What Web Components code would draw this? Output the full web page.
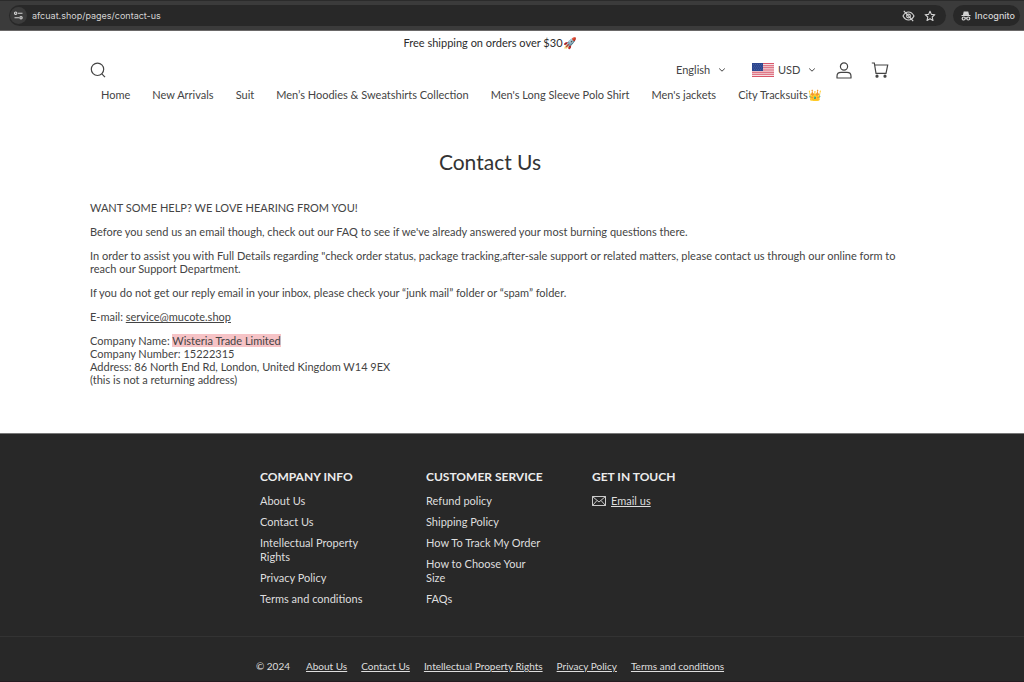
<!DOCTYPE html>
<html lang="en">
<head>
<meta charset="utf-8">
<title>Contact Us</title>
<style>
html { background: #282828; }
body { margin: 0; font-family: Lato, "Noto Sans", sans-serif; font-size: 11px; color: #444; background: #fff; }
</style>
</head>
<body>
<shop-page></shop-page>
<script>
function define(name, html) {
  const template = document.createElement('template');
  template.innerHTML = html;
  customElements.define(name, class extends HTMLElement {
    constructor() {
      super();
      this.attachShadow({ mode: 'open' }).append(template.content.cloneNode(true));
    }
  });
}

define('browser-bar', `
<style>
:host { display: flex; gap: 7px; box-sizing: border-box; height: 31px; padding: 4px 4px 4px 9px; background: #3b3b3b; border-top: 1px solid #2b2b2b; border-bottom: 1px solid #6a6868; color: #d4d4d4; font-family: Inter, sans-serif; font-size: 9px; }
.pill { display: flex; align-items: center; background: #282828; border-radius: 11px; }
.address { flex: 1; gap: 5px; padding-right: 10px; }
.site { display: grid; place-items: center; width: 17px; height: 17px; margin-left: 1px; padding: 0; border: 0; border-radius: 50%; background: #3b3b3b; color: inherit; }
input { flex: 1; min-width: 0; border: 0; padding: 0; background: none; outline: 0; color: inherit; font: inherit; }
.act { display: grid; padding: 0; border: 0; background: none; color: inherit; }
.acts { display: flex; gap: 9px; }
.mode { gap: 4px; padding: 0 5px 0 8px; font-weight: 500; }
svg { display: block; fill: none; stroke: currentColor; }
</style>
<div class="pill address">
  <button class="site" aria-label="Site information"><svg width="11" height="11" viewBox="0 0 11 11" stroke-width="1.1"><circle cx="2.700" cy="3.200" r="1.200"/><path d="M5 3.200h4.500M1.500 7.800h4.500"/><circle cx="8" cy="7.800" r="1.200"/></svg></button>
  <input aria-label="Address" value="afcuat.shop/pages/contact-us">
  <div class="acts">
    <button class="act" aria-label="Third-party cookies blocked"><svg width="13" height="12" viewBox="0 0 13 12" stroke-width="1.100"><path d="M1 6C2.500 3.200 4.400 2 6.500 2S10.500 3.200 12 6c-1.500 2.800-3.400 4-5.500 4S2.500 8.800 1 6Z"/><circle cx="6.500" cy="6" r="1.900"/><path d="M1.800 .8l9.400 10.400"/></svg></button>
    <button class="act" aria-label="Bookmark"><svg width="12" height="12" viewBox="0 0 12 12" stroke-width="1.100" stroke-linejoin="round"><path d="M6 1.200l1.400 3.200 3.500.3-2.700 2.300.8 3.500L6 8.700l-3 1.800.8-3.500L1.100 4.700l3.500-.3z"/></svg></button>
  </div>
</div>
<div class="pill mode">
  <svg width="10" height="10" viewBox="0 0 10 10" stroke-width="1.200"><path fill="currentColor" d="M2.600 3.800L3.200 1h3.600l.6 2.800z"/><path d="M.5 4.500h9M4 7.200q1-.8 2 0"/><circle cx="2.700" cy="7.500" r="1.500"/><circle cx="7.300" cy="7.500" r="1.500"/></svg>
  <span>Incognito</span>
</div>`);

define('pick-list', `
<style>
:host { display: flex; align-items: center; gap: 4px; }
label { display: grid; align-items: center; }
select, svg { grid-area: 1 / 1; }
select { appearance: none; margin: 0; border: 0; padding: 0 15px 0 0; background: none; color: inherit; font: inherit; line-height: 14px; }
svg { justify-self: end; pointer-events: none; }
</style>
<slot name="icon"></slot>
<label><select></select><svg width="8" height="6" viewBox="0 0 8 6" fill="none" stroke="currentColor"><path d="M1.200 1.500L4 4.200l2.800-2.700"/></svg></label>`);

define('shop-header', `
<style>
:host { display: block; }
.announce { margin: 0; padding-top: 5px; text-align: center; line-height: 14px; color: #2c2c2c; }
.tools { display: flex; align-items: center; height: 20px; margin-top: 10px; }
.search { margin-right: auto; }
button { display: grid; padding: 0; border: 0; background: none; color: inherit; }
.tools svg { display: block; }
pick-list + pick-list { margin-left: 26px; }
.account { margin: 0 19px 0 20px; }
.cart { margin-right: 1px; }
nav { display: flex; gap: 22px; margin-top: 8px; padding-left: 11px; line-height: 14px; white-space: nowrap; }
a { color: inherit; text-decoration: none; }
</style>
<p class="announce">Free shipping on orders over $30🚀</p>
<div class="tools">
  <button class="search" aria-label="Search"><svg width="16" height="16" viewBox="0 0 16 16" fill="none" stroke="currentColor" stroke-width="1.200"><circle cx="7.500" cy="7.300" r="6.200"/><path d="M11.800 11.800l3.200 3.400"/></svg></button>
  <pick-list id="language"></pick-list>
  <pick-list id="currency"><svg slot="icon" width="22" height="14" viewBox="0 0 22 14"><path fill="#f4dfe2" d="M0 0h22v14H0z"/><path stroke="#d9566a" stroke-width="1.100" d="M0 .5h22M0 2.700h22M0 4.800h22M0 7h22M0 9.200h22M0 11.300h22M0 13.500h22"/><path fill="#2c468f" d="M0 0h11v8H0z"/><path stroke="#6f80b4" stroke-width=".6" stroke-dasharray=".7 1.300" d="M1 1.500h9.500M2 3.200h8.500M1 4.900h9.500M2 6.600h8.500"/></svg></pick-list>
  <button class="account" aria-label="Account"><svg width="16" height="17" viewBox="0 0 16 17" fill="none" stroke="currentColor" stroke-width="1.200"><circle cx="8" cy="4.500" r="3.600"/><path d="M1 16v-1.800C1 11.800 2.800 10.400 5 10.400h6c2.200 0 4 1.400 4 3.800V16Z" stroke-linejoin="round"/></svg></button>
  <button class="cart" aria-label="Cart"><svg width="18" height="16" viewBox="0 0 18 16" fill="none" stroke="currentColor" stroke-width="1.200"><path d="M.8 1H3.300L5 11.300h10L16.700 3H3.700"/><circle cx="6" cy="14.200" r="1" fill="currentColor"/><circle cx="14" cy="14.200" r="1" fill="currentColor"/></svg></button>
</div>
<nav aria-label="Main">
  <a href="#">Home</a><a href="#">New Arrivals</a><a href="#">Suit</a><a href="#">Men’s Hoodies &amp; Sweatshirts Collection</a><a href="#">Men's Long Sleeve Polo Shirt</a><a href="#">Men's jackets</a><a href="#">City Tracksuits👑</a>
</nav>`);

define('contact-article', `
<style>
:host { display: block; padding: 46px 0 36px; line-height: 13px; }
h1 { margin: 0 0 25px; text-align: center; font-size: 21px; line-height: 28px; font-weight: 400; color: #333; }
p { margin: 0 -8px 11px 0; }
a { color: inherit; text-underline-offset: 1px; }
mark { background: #f6c3c6; color: inherit; }
</style>
<h1>Contact Us</h1>
<p>WANT SOME HELP? WE LOVE HEARING FROM YOU!</p>
<p>Before you send us an email though, check out our FAQ to see if we've already answered your most burning questions there.</p>
<p>In order to assist you with Full Details regarding "check order status, package tracking,after-sale support or related matters, please contact us through our online form to reach our Support Department.</p>
<p>If you do not get our reply email in your inbox, please check your “junk mail” folder or “spam” folder.</p>
<p>E-mail: <a href="#">service@mucote.shop</a></p>
<p>Company Name: <mark>Wisteria Trade Limited</mark><br>Company Number: 15222315<br>Address: 86 North End Rd, London, United Kingdom W14 9EX<br>(this is not a returning address)</p>`);

define('link-column', `
<style>
:host { display: block; padding-right: 10px; }
h2 { margin: 0 0 10px; font-size: 12px; line-height: 14px; font-weight: 700; color: #ececec; white-space: nowrap; }
::slotted(a) { display: block; width: fit-content; margin-bottom: 7px; color: inherit; text-decoration: none; }
</style>
<h2></h2><slot></slot>`);

define('shop-footer', `
<style>
:host { display: block; border-top: 1px solid #777; border-bottom: 1px solid #251c21; background: #282828; color: #dedede; line-height: 14px; }
.columns { display: grid; grid-template-columns: repeat(3, 128px); gap: 38px; justify-content: center; padding: 36px 44px 23px 0; }
.legal { display: flex; justify-content: center; gap: 14px; padding: 22px 44px 7px 0; border-top: 1px solid #333; font-size: 10px; }
.legal span { margin-right: 2px; }
.legal a { color: inherit; text-underline-offset: 1px; }
.mail { display: flex; align-items: center; gap: 5px; }
.mail a { color: inherit; text-underline-offset: 1px; }
</style>
<div class="columns">
  <link-column heading="COMPANY INFO"><a href="#">About Us</a><a href="#">Contact Us</a><a href="#">Intellectual Property Rights</a><a href="#">Privacy Policy</a><a href="#">Terms and conditions</a></link-column>
  <link-column heading="CUSTOMER SERVICE"><a href="#">Refund policy</a><a href="#">Shipping Policy</a><a href="#">How To Track My Order</a><a href="#">How to Choose Your Size</a><a href="#">FAQs</a></link-column>
  <link-column heading="GET IN TOUCH"><div class="mail"><svg width="14" height="10" viewBox="0 0 14 10" fill="none" stroke="currentColor" stroke-width=".9"><path d="M.5.5h13v9H.5zL7 6l6.500-5.500M.5 9.500L5 4.500M13.500 9.500L9 4.500"/></svg><a href="#">Email us</a></div></link-column>
</div>
<div class="legal"><span>© 2024</span><a href="#">About Us</a><a href="#">Contact Us</a><a href="#">Intellectual Property Rights</a><a href="#">Privacy Policy</a><a href="#">Terms and conditions</a></div>`);

define('shop-page', `
<style>
:host { display: flex; flex-direction: column; min-height: 100vh; }
.page { padding: 0 44px 0 0; }
.inner { max-width: 800px; margin: 0 auto; }
shop-footer { flex: 1; }
</style>
<browser-bar></browser-bar>
<div class="page"><div class="inner"><shop-header></shop-header><main><contact-article></contact-article></main></div></div>
<shop-footer></shop-footer>`);

const root = document.querySelector('shop-page').shadowRoot;
const header = root.querySelector('shop-header').shadowRoot;
for (const [id, label, options] of [['language', 'Language', ['English']], ['currency', 'Currency', ['USD']]]) {
  const select = header.getElementById(id).shadowRoot.querySelector('select');
  select.setAttribute('aria-label', label);
  options.forEach(text => select.add(new Option(text)));
}
root.querySelector('shop-footer').shadowRoot.querySelectorAll('link-column').forEach(column => {
  column.shadowRoot.querySelector('h2').textContent = column.getAttribute('heading');
});
</script>
</body>
</html>
